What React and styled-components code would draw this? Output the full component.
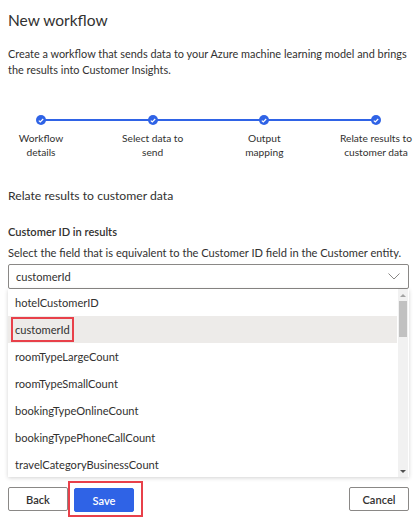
import styled, { createGlobalStyle } from 'styled-components'

const GlobalStyle = createGlobalStyle`
  body {
    margin: 0;
    background: #ffffff;
    font-family: "Segoe UI", Lato, "Noto Sans", sans-serif;
    color: #323130;
  }
`

const steps = [
  ['Workflow', 'details'],
  ['Select data to', 'send'],
  ['Output', 'mapping'],
  ['Relate results to', 'customer data'],
]

const options = [
  'hotelCustomerID',
  'customerId',
  'roomTypeLargeCount',
  'roomTypeSmallCount',
  'bookingTypeOnlineCount',
  'bookingTypePhoneCallCount',
  'travelCategoryBusinessCount',
]

function Check() {
  return (
    <svg width="6" height="5" viewBox="0 0 6 5">
      <path d="M0.8 2.6 L2.3 4 L5.2 1" fill="none" stroke="#fff" strokeWidth="1.2" />
    </svg>
  )
}

function Chevron() {
  return (
    <svg width="12" height="7" viewBox="0 0 12 7">
      <path d="M0.5 0.5 L6 6 L11.5 0.5" fill="none" stroke="#8a8886" strokeWidth="1" />
    </svg>
  )
}

export default function App() {
  return (
    <Page>
      <GlobalStyle />
      <Title>New workflow</Title>
      <Intro>
        Create a workflow that sends data to your Azure machine learning model and brings<br />
        the results into Customer Insights.
      </Intro>

      <Stepper>
        {steps.map(([a, b]) => (
          <Step key={a}>
            <Dot><Check /></Dot>
            <StepLabel>{a}<br />{b}</StepLabel>
          </Step>
        ))}
      </Stepper>

      <Section>Relate results to customer data</Section>
      <FieldLabel>Customer ID in results</FieldLabel>
      <Helper>Select the field that is equivalent to the Customer ID field in the Customer entity.</Helper>

      <Select>
        <span>customerId</span>
        <Chevron />
      </Select>
      <Listbox>
        <Items>
          {options.map((o, i) => (
            <Item key={o} selected={i === 1}>
              {i === 1 ? <Marked>{o}</Marked> : o}
            </Item>
          ))}
        </Items>
        <Scrollbar>
          <Arrow up />
          <Thumb />
          <Track />
          <Arrow />
        </Scrollbar>
      </Listbox>

      <Footer>
        <Button>Back</Button>
        <Callout><Button primary>Save</Button></Callout>
        <Spacer />
        <Button>Cancel</Button>
      </Footer>
    </Page>
  )
}

const Page = styled.div`
  width: 401px;
  padding: 0 8px;
`

const Title = styled.h1`
  margin: 0;
  padding-top: 8px;
  font-size: 15.5px;
  font-weight: 400;
  line-height: 24px;
`

const Intro = styled.p`
  margin: 14px 0 0;
  font-size: 10.9px;
  line-height: 16px;
  white-space: nowrap;
`

const Stepper = styled.div`
  position: relative;
  display: flex;
  justify-content: space-between;
  margin-top: 37px;

  &::before {
    content: '';
    position: absolute;
    left: 33px;
    right: 33px;
    top: 4px;
    height: 2px;
    background: #2f63e6;
  }
`

const Step = styled.div`
  position: relative;
  width: 66px;
  display: flex;
  flex-direction: column;
  align-items: center;
`

const Dot = styled.div`
  width: 10px;
  height: 10px;
  border-radius: 50%;
  background: #2f63e6;
  display: flex;
  align-items: center;
  justify-content: center;
`

const StepLabel = styled.div`
  margin-top: 6px;
  font-size: 10.2px;
  line-height: 14px;
  text-align: center;
  white-space: nowrap;
`

const Section = styled.h2`
  margin: 28px 0 0;
  font-size: 12.2px;
  font-weight: 400;
  line-height: 18px;
`

const FieldLabel = styled.div`
  margin-top: 19px;
  font-size: 11.1px;
  font-weight: 600;
  line-height: 16px;
`

const Helper = styled.div`
  margin-top: 5px;
  font-size: 11.1px;
  line-height: 16px;
`

const Select = styled.div`
  margin-top: 3px;
  height: 23px;
  border: 1px solid #8a8886;
  border-radius: 2px;
  display: flex;
  align-items: center;
  justify-content: space-between;
  padding: 0 8px 0 7px;
  font-size: 11.1px;
`

const Listbox = styled.div`
  height: 188px;
  display: flex;
  background: #fff;
  box-shadow: 0 1px 4px rgba(0, 0, 0, 0.18);
  overflow: hidden;
`

const Items = styled.div`
  flex: 1;
`

const Item = styled.div`
  height: 27px;
  display: flex;
  align-items: center;
  padding-left: 7px;
  font-size: 11.1px;
  background: ${p => (p.selected ? '#edebe9' : '#fff')};
`

const Marked = styled.span`
  display: inline-block;
  margin-left: -4px;
  padding: 0 2px;
  line-height: 21px;
  border: 2px solid #e8404a;
`

const Scrollbar = styled.div`
  width: 10px;
  margin: 0 1px;
  background: #f1f1f1;
  display: flex;
  flex-direction: column;
`

const Arrow = styled.div`
  height: 12px;
  display: flex;
  align-items: center;
  justify-content: center;

  &::after {
    content: '';
    border-left: 3px solid transparent;
    border-right: 3px solid transparent;
    ${p => (p.up ? 'border-bottom: 3px solid #a3a3a3;' : 'border-top: 3px solid #505050;')}
  }
`

const Thumb = styled.div`
  height: 36px;
  margin: 0 1px;
  background: #c1c1c1;
`

const Track = styled.div`
  flex: 1;
`

const Footer = styled.div`
  display: flex;
  align-items: center;
  margin-top: 4px;
`

const Callout = styled.span`
  display: inline-flex;
  padding: 5px 7px 3px 4px;
  border: 2px solid #e8404a;
`

const Spacer = styled.div`
  flex: 1;
`

const Button = styled.button`
  height: 24px;
  min-width: 60px;
  padding: 0 12px;
  font-family: inherit;
  font-size: 11.1px;
  font-weight: 600;
  border-radius: 2px;
  border: 1px solid ${p => (p.primary ? '#2f63e6' : '#8a8886')};
  background: ${p => (p.primary ? '#2f63e6' : '#fff')};
  color: ${p => (p.primary ? '#fff' : '#323130')};
`
